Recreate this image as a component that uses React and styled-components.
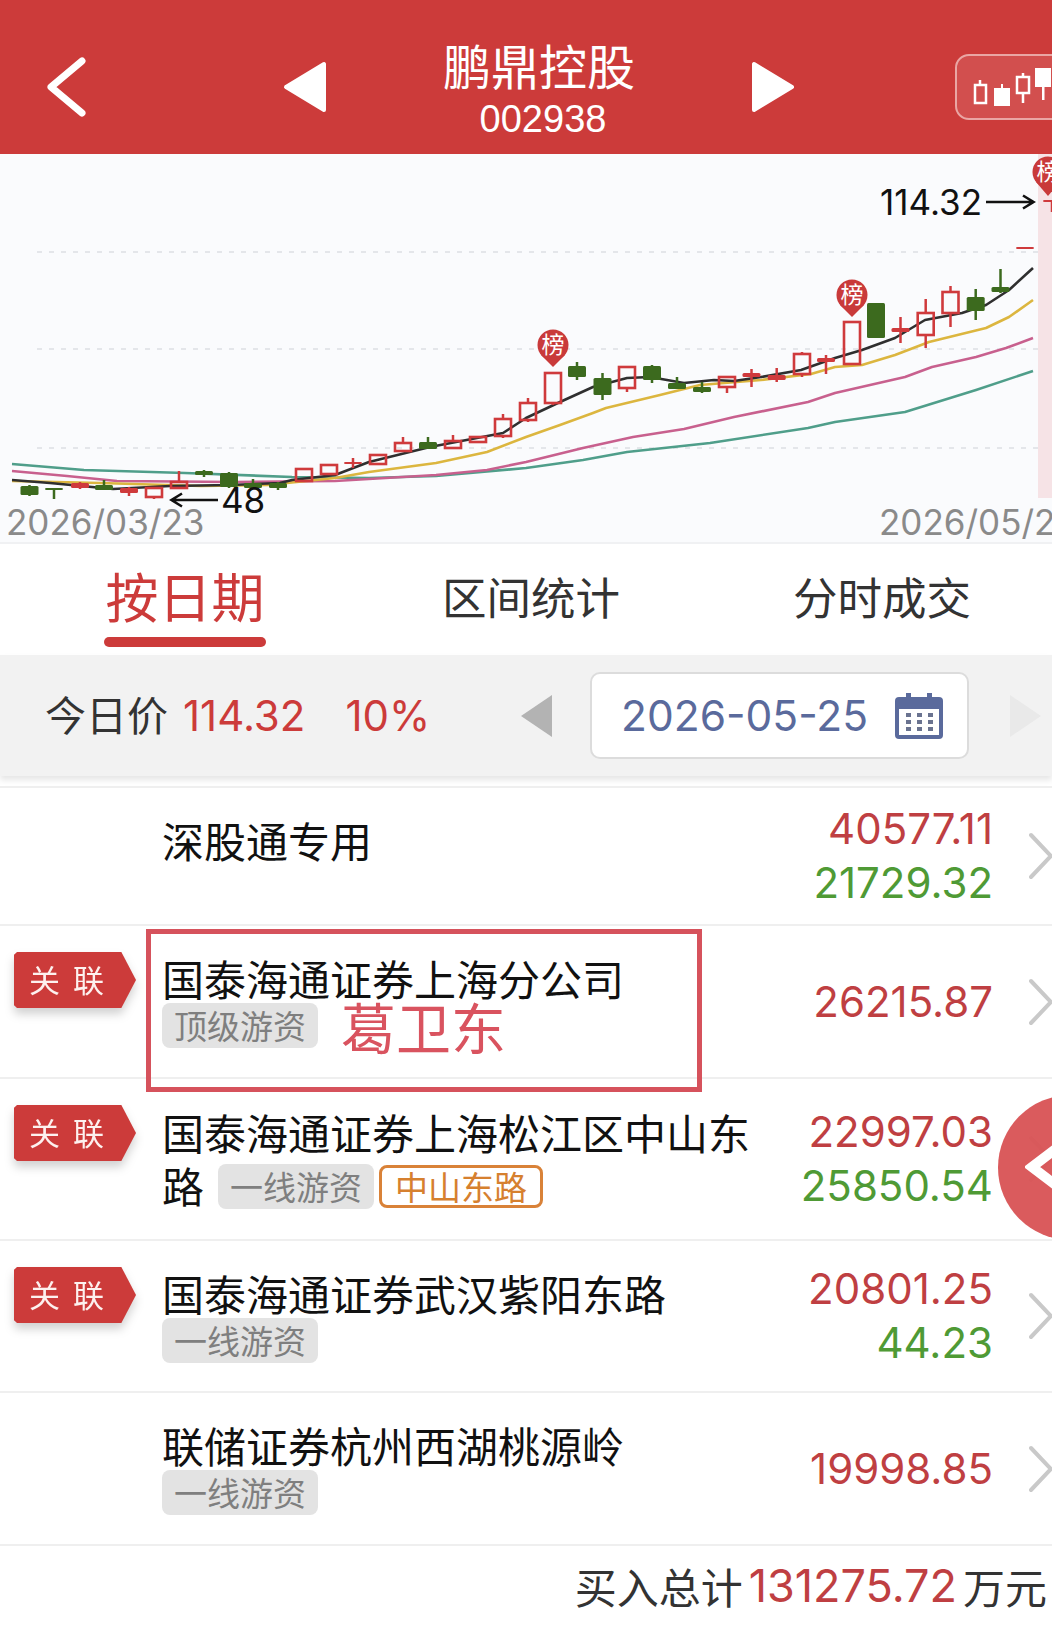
import React from "react";
import styled, { createGlobalStyle } from "styled-components";

const RED = "#cc3b3a";
const NUM_RED = "#bf3f42";
const NUM_GREEN = "#4f9a35";
const CJK = '"Noto Sans CJK SC", "Noto Sans", sans-serif';
const NUM = 'Inter, "Noto Sans CJK SC", sans-serif';

const GlobalStyle = createGlobalStyle`
  html, body {
    margin: 0;
    padding: 0;
    background: #fff;
  }
  * {
    box-sizing: border-box;
  }
`;

const Page = styled.div`
  position: relative;
  width: 1052px;
  height: 1628px;
  overflow: hidden;
  background: #fff;
  font-family: ${NUM};
  color: #111;
`;

/* header */
const Header = styled.header`
  height: 154px;
  display: flex;
  align-items: center;
  padding: 20px 0 0 47px;
  background: ${RED};
  overflow: hidden;
  color: #fff;
`;

const BackIcon = styled.svg`
  width: 40px;
  height: 60px;
  margin-right: 196px;
  flex-shrink: 0;
`;

const Triangle = styled.svg`
  width: 44px;
  height: 52px;
  flex-shrink: 0;
`;

const TitleBlock = styled.div`
  width: 424px;
  flex-shrink: 0;
  display: flex;
  flex-direction: column;
  align-items: center;
`;

const StockName = styled.div`
  font-family: ${CJK};
  font-size: 48px;
  line-height: 60px;
`;

const StockCode = styled.div`
  font-family: "Liberation Sans", sans-serif;
  font-size: 38px;
  line-height: 44px;
  margin: 3px 0 0 8px;
`;

const KlineButton = styled.div`
  width: 130px;
  height: 66px;
  margin-left: 160px;
  flex-shrink: 0;
  border: 2px solid #eaa6a4;
  border-radius: 14px;
  background: #d24f4e;
  display: flex;
`;

const KlineIcon = styled.svg`
  width: 100px;
  height: 62px;
  margin-left: 16px;
`;

/* chart */
const ChartArea = styled.section`
  height: 390px;
  background: #fafbfd;
  border-bottom: 2px solid #f0f1f3;
`;

const ChartSvg = styled.svg`
  display: block;
  width: 1052px;
  height: 388px;
`;

/* tabs */
const Tabs = styled.nav`
  height: 111px;
  display: grid;
  grid-template-columns: 346px 346px 1fr;
  padding-left: 12px;
`;

const Tab = styled.div`
  position: relative;
  display: flex;
  justify-content: center;
  align-items: center;
  font-family: ${CJK};
  font-size: ${(props) => (props.$active ? "53px" : "44.5px")};
  color: ${(props) => (props.$active ? RED : "#333")};
  padding-bottom: ${(props) => (props.$active ? "9px" : "8px")};

  &:nth-child(3) {
    padding-left: 8px;
  }
`;

const TabLine = styled.span`
  position: absolute;
  bottom: 8px;
  left: 50%;
  width: 162px;
  height: 10px;
  margin-left: -81px;
  border-radius: 5px;
  background: ${RED};
`;

/* date toolbar */
const Toolbar = styled.div`
  height: 121px;
  display: flex;
  align-items: center;
  padding-left: 45px;
  background: #f2f2f2;
  box-shadow: 0 4px 6px rgba(0, 0, 0, 0.1);
  position: relative;
`;

const PriceGroup = styled.div`
  width: 476px;
  flex-shrink: 0;
  display: flex;
  align-items: center;
`;

const PriceLabel = styled.span`
  font-family: ${CJK};
  font-size: 41px;
  color: #333;
  margin-right: 15px;
  padding-bottom: 6px;
`;

const PriceValue = styled.span`
  font-size: 42px;
  color: ${RED};
  margin-right: ${(props) => props.$gap || 0}px;
`;

const DateBox = styled.div`
  width: 379px;
  height: 87px;
  margin: 0 40px 0 37px;
  padding: 0 24px 0 29px;
  display: flex;
  align-items: center;
  justify-content: space-between;
  background: #fff;
  border: 2px solid #dcdcdc;
  border-radius: 10px;
  font-size: 42.5px;
  color: #5a6a9c;
`;

const PagerIcon = styled.svg`
  width: 32px;
  height: 42px;
  flex-shrink: 0;
`;

const CalendarIcon = styled.svg`
  width: 48px;
  height: 46px;
  flex-shrink: 0;
`;

/* list */
const List = styled.div`
  margin-top: 10px;
  border-top: 2px solid #efefef;
`;

const Row = styled.div`
  position: relative;
  height: ${(props) => props.$height}px;
  display: flex;
  align-items: center;
  border-bottom: 2px solid #efefef;
`;

const BadgeCol = styled.div`
  width: 162px;
  align-self: flex-start;
  flex-shrink: 0;
  padding: ${(props) => props.$top}px 0 0 14px;
`;

const BadgeShadow = styled.div`
  width: 122px;
  filter: drop-shadow(0 6px 5px rgba(0, 0, 0, 0.18));
`;

const Badge = styled.div`
  height: 56px;
  padding-left: 15px;
  background: ${RED};
  clip-path: polygon(3px 0, 88% 0, 100% 50%, 88% 100%, 3px 100%, 0 95%, 0 5%);
  font-family: ${CJK};
  font-size: 31px;
  line-height: 54px;
  letter-spacing: 13px;
  color: #fdf1ef;
  white-space: nowrap;
`;

const NameCol = styled.div`
  width: 600px;
  flex-shrink: 0;
  align-self: flex-start;
  padding-top: ${(props) => props.$top}px;
  font-family: ${CJK};
  font-size: 42px;
  line-height: 53px;
  color: #111;
`;

const TagLine = styled.div`
  display: ${(props) => (props.$inline ? "inline-flex" : "flex")};
  align-items: center;
  gap: 5px;
  margin-left: ${(props) => (props.$inline ? "14px" : "0")};
  vertical-align: top;
  height: 46px;
  margin-top: ${(props) => (props.$inline ? "5px" : "-2px")};
`;

const Tag = styled.span`
  height: ${(props) => (props.$outline ? "43px" : "45px")};
  padding: 0 ${(props) => (props.$outline ? "13px" : "12px")};
  display: inline-flex;
  align-items: center;
  border-radius: 8px;
  font-size: 33px;
  line-height: 1;
  color: ${(props) => (props.$outline ? "#d6802f" : "#7f7f7f")};
  background: ${(props) => (props.$outline ? "transparent" : "#e3e3e3")};
  border: ${(props) => (props.$outline ? "3px solid #d98238" : "none")};
`;

const NoteName = styled.span`
  margin-left: 18px;
  font-size: 55px;
  line-height: 46px;
  color: #d9535f;
`;

const NoteFrame = styled.div`
  position: absolute;
  left: 146px;
  top: 3px;
  width: 556px;
  height: 163px;
  border: 5px solid #d6525c;
  z-index: 2;
`;

const ValueCol = styled.div`
  margin-left: auto;
  margin-right: 36px;
  text-align: right;
  font-size: 42px;
  line-height: 54px;
`;

const Value = styled.div`
  color: ${(props) => (props.$green ? NUM_GREEN : NUM_RED)};
`;

const RowArrow = styled.svg`
  width: 24px;
  height: 48px;
  flex-shrink: 0;
  margin-right: -1px;
`;

const FloatButton = styled.div`
  position: absolute;
  left: 998px;
  top: 1095px;
  width: 145px;
  height: 145px;
  padding: 36px 0 0 27px;
  border-radius: 50%;
  background: rgba(216, 84, 86, 0.96);
  z-index: 3;
`;

const FloatIcon = styled.svg`
  display: block;
  width: 54px;
  height: 72px;
`;

const Footer = styled.footer`
  height: 83px;
  display: flex;
  align-items: center;
  justify-content: flex-end;
  gap: 6px;
  padding: 0 5px 4px 0;
  font-family: ${CJK};
  font-size: 42px;
  color: #333;
`;

const FooterNum = styled.span`
  font-family: ${NUM};
  font-size: 45px;
  color: ${NUM_RED};
`;

// x, body top, body bottom, wick top, wick bottom, kind (h hollow red, r solid red, g green)
const candles = [
  [29.5, 486, 495, 485, 496, "g"],
  [54, 488, 490, 488, 499, "g"],
  [80, 483, 488, 482, 489, "r"],
  [104, 485, 490, 480, 490, "g"],
  [129, 488, 493, 487, 496, "r"],
  [154, 488, 497, 488, 499, "h"],
  [179, 482, 488, 471, 488, "h"],
  [204, 471, 475, 470, 477, "g"],
  [229, 473, 487, 472, 488, "g"],
  [253, 483, 488, 479, 488, "g"],
  [278, 483, 488, 482, 490, "g"],
  [304, 469, 481, 469, 481, "h"],
  [329, 465, 474, 465, 474, "h"],
  [353, 462, 464, 458, 468, "r"],
  [378, 455, 464, 455, 464, "h"],
  [403, 443, 451, 437, 451, "h"],
  [428, 442, 449, 437, 449, "g"],
  [453, 441, 448, 435, 448, "h"],
  [478, 437, 442, 437, 443, "h"],
  [503, 419, 436, 414, 438, "h"],
  [528, 403, 420, 398, 422, "h"],
  [553, 373, 403, 373, 405, "h"],
  [577, 366, 377, 362, 380, "g"],
  [602.5, 378, 395, 373, 400, "g"],
  [627, 367, 388, 367, 392, "h"],
  [652, 366, 380, 365, 383, "g"],
  [677, 383, 389, 377, 389, "g"],
  [702, 387, 392, 382, 393, "g"],
  [727, 377, 387, 377, 393, "h"],
  [751.5, 373, 377, 369, 387, "r"],
  [776.7, 375, 380, 368, 382, "r"],
  [802, 354, 374, 352, 377, "h"],
  [826, 358, 362, 355, 374, "r"],
  [852, 322, 364, 322, 365, "h"],
  [876, 303, 338, 303, 338, "g"],
  [900.5, 328, 332, 317, 343, "r"],
  [925.7, 313, 335, 299, 348, "h"],
  [950.5, 292, 313, 286, 327, "h"],
  [975.7, 297, 311, 289, 320, "g"],
  [1000.5, 287, 292, 269, 293, "g"],
  [1025, 247, 249, 247, 249, "r"],
  [1052, 200, 202, 200, 212, "r"],
];

const lines = [
  {
    color: "#4f9e8a",
    points:
      "12,464 84,470 185,473 292,477 369,478 436,476 526,468 583,460 627,452 710,443 808,428 835,422 905,412 976,390 1033,371",
  },
  {
    color: "#c8608e",
    points:
      "12,471 67,476 117,481 235,482 335,481 436,475 487,470 526,462 583,448 633,437 684,429 734,417 808,402 835,393 905,377 932,367 976,357 1006,348 1033,338",
  },
  {
    color: "#dcb63f",
    points:
      "12,481 100,483 201,486 268,485 335,478 369,472 436,463 487,452 526,437 560,425 593,413 606,408 660,395 700,385 761,380 811,374 835,367 862,365 895,355 929,342 986,328 1009,317 1033,300",
  },
  {
    color: "#2f2f2f",
    points:
      "12,480 50,483 113,489 170,486 230,485 280,483 292,480 335,475 369,462 430,447 503,433 526,418 560,402 593,387 627,378 650,377 684,383 714,380 734,381 761,377 801,370 835,358 862,350 895,338 925,320 962,313 986,305 1009,290 1033,268",
  },
];

function Candle({ data }) {
  const [x, top, bottom, wickTop, wickBottom, kind] = data;
  const color = kind === "g" ? "#3c6a1e" : "#cf3a3c";
  const w = 18;
  return (
    <g>
      <line x1={x} x2={x} y1={wickTop} y2={top} stroke={color} strokeWidth="2.5" />
      <line x1={x} x2={x} y1={bottom} y2={wickBottom} stroke={color} strokeWidth="2.5" />
      {kind === "h" ? (
        <rect
          x={x - w / 2 + 1}
          y={top}
          width={w - 2}
          height={bottom - top}
          fill="none"
          stroke={color}
          strokeWidth="2.6"
        />
      ) : (
        <rect x={x - w / 2} y={top} width={w} height={bottom - top} fill={color} rx="1.5" />
      )}
    </g>
  );
}

function Marker({ x, y, tip }) {
  return (
    <g>
      <path d={`M${x - 12} ${y + 10} L${x} ${tip} L${x + 12} ${y + 10} Z`} fill="#c93a3a" />
      <circle cx={x} cy={y} r="15.5" fill="#c93a3a" />
      <text
        x={x}
        y={y + 8}
        textAnchor="middle"
        fontSize="23"
        fill="#fff"
        fontFamily="Noto Sans CJK SC"
      >
        榜
      </text>
    </g>
  );
}

function Chart() {
  return (
    <ChartSvg viewBox="0 154 1052 388">
      <rect x="1038" y="154" width="14" height="344" fill="#f6e3e6" />
      {[252, 349, 448].map((y) => (
        <line
          key={y}
          x1="37"
          x2="1040"
          y1={y}
          y2={y}
          stroke="#e4e6ea"
          strokeWidth="2"
          strokeDasharray="5 7"
        />
      ))}
      {lines.map((l) => (
        <polyline
          key={l.color}
          points={l.points}
          fill="none"
          stroke={l.color}
          strokeWidth="2.6"
          strokeLinejoin="round"
        />
      ))}
      {candles.map((c) => (
        <Candle key={c[0]} data={c} />
      ))}
      <Marker x={553} y={345} tip={367} />
      <Marker x={852} y={295} tip={317} />
      <Marker x={1048} y={172} tip={196} />

      <text x="880" y="215" fontSize="35" fill="#111" fontFamily="Inter">
        114.32
      </text>
      <path d="M986 202H1033M1023 195.5L1033.5 202L1023 208.5" fill="none" stroke="#111" strokeWidth="2.6" />
      <path d="M218 500H172M182 493.5L171.5 500L182 506.5" fill="none" stroke="#111" strokeWidth="2.6" />
      <text x="221" y="513" fontSize="35" fill="#111" fontFamily="Inter">
        48
      </text>
      <text x="6" y="535" fontSize="35" fill="#8a8a8a" fontFamily="Inter">
        2026/03/23
      </text>
      <text x="879" y="535" fontSize="35" fill="#8a8a8a" fontFamily="Inter">
        2026/05/25
      </text>
    </ChartSvg>
  );
}

const rows = [
  { id: 1, height: 138, nameTop: 25, name: "深股通专用", values: ["40577.11", "21729.32"] },
  {
    id: 2,
    height: 153,
    badge: 26,
    nameTop: 25,
    name: "国泰海通证券上海分公司",
    tags: ["顶级游资"],
    note: "葛卫东",
    values: ["26215.87"],
  },
  {
    id: 3,
    height: 162,
    badge: 26,
    nameTop: 26,
    name: "国泰海通证券上海松江区中山东路",
    tags: ["一线游资"],
    place: "中山东路",
    inline: true,
    values: ["22997.03", "25850.54"],
  },
  {
    id: 4,
    height: 152,
    badge: 26,
    nameTop: 25,
    name: "国泰海通证券武汉紫阳东路",
    tags: ["一线游资"],
    values: ["20801.25", "44.23"],
  },
  {
    id: 5,
    height: 153,
    nameTop: 25,
    name: "联储证券杭州西湖桃源岭",
    tags: ["一线游资"],
    values: ["19998.85"],
  },
];

function ListRow({ row }) {
  const greenAt = row.values.length > 1 ? 1 : -1;
  return (
    <Row $height={row.height}>
      <BadgeCol $top={row.badge || 0}>
        {row.badge && (
          <BadgeShadow>
            <Badge>关联</Badge>
          </BadgeShadow>
        )}
      </BadgeCol>
      <NameCol $top={row.nameTop}>
        {row.name}
        {row.tags && (
          <TagLine $inline={row.inline}>
            {row.tags.map((t) => (
              <Tag key={t}>{t}</Tag>
            ))}
            {row.place && <Tag $outline>{row.place}</Tag>}
            {row.note && <NoteName>{row.note}</NoteName>}
          </TagLine>
        )}
      </NameCol>
      {row.note && <NoteFrame />}
      <ValueCol>
        {row.values.map((v, i) => (
          <Value key={v} $green={i === greenAt}>
            {v}
          </Value>
        ))}
      </ValueCol>
      <RowArrow viewBox="0 0 24 48">
        <path d="M2 3L22 24L2 45" fill="none" stroke="#c9c9c9" strokeWidth="4" strokeLinecap="round" />
      </RowArrow>
    </Row>
  );
}

export default function App() {
  return (
    <Page>
      <GlobalStyle />
      <Header>
        <BackIcon viewBox="0 0 40 60">
          <path
            d="M35 4L4 30L35 56"
            fill="none"
            stroke="#fff"
            strokeWidth="7"
            strokeLinecap="round"
            strokeLinejoin="round"
          />
        </BackIcon>
        <Triangle viewBox="0 0 44 52">
          <path d="M41 3V49L3 26Z" fill="#fff" stroke="#fff" strokeWidth="4" strokeLinejoin="round" />
        </Triangle>
        <TitleBlock>
          <StockName>鹏鼎控股</StockName>
          <StockCode>002938</StockCode>
        </TitleBlock>
        <Triangle viewBox="0 0 44 52">
          <path d="M3 3V49L41 26Z" fill="#fff" stroke="#fff" strokeWidth="4" strokeLinejoin="round" />
        </Triangle>
        <KlineButton>
          <KlineIcon viewBox="0 0 100 62">
            <g fill="none" stroke="#fff" strokeWidth="2.5">
              <path d="M7 24V29" />
              <rect x="2" y="29" width="11" height="18" />
              <path d="M50 17V21M50 37V47" />
              <rect x="44" y="21" width="12" height="16" />
            </g>
            <g fill="#fff">
              <rect x="21" y="32" width="16" height="18" />
              <rect x="28" y="28" width="2" height="5" />
              <rect x="62" y="12" width="16" height="19" />
              <rect x="69" y="30" width="2.5" height="14" />
            </g>
          </KlineIcon>
        </KlineButton>
      </Header>

      <ChartArea>
        <Chart />
      </ChartArea>

      <Tabs>
        <Tab $active>
          按日期
          <TabLine />
        </Tab>
        <Tab>区间统计</Tab>
        <Tab>分时成交</Tab>
      </Tabs>

      <Toolbar>
        <PriceGroup>
          <PriceLabel>今日价</PriceLabel>
          <PriceValue $gap={40}>114.32</PriceValue>
          <PriceValue>10%</PriceValue>
        </PriceGroup>
        <PagerIcon viewBox="0 0 32 42">
          <path d="M31 0V42L0 21Z" fill="#b3b3b3" />
        </PagerIcon>
        <DateBox>
          2026-05-25
          <CalendarIcon viewBox="0 0 48 46">
            <path d="M4 4H44A4 4 0 0 1 48 8V42A4 4 0 0 1 44 46H4A4 4 0 0 1 0 42V8A4 4 0 0 1 4 4Z" fill="#5a6a9c" />
            <rect x="11" y="0" width="5" height="11" fill="#5a6a9c" />
            <rect x="32" y="0" width="5" height="11" fill="#5a6a9c" />
            <rect x="4" y="16" width="40" height="26" fill="#fff" />
            <g fill="#6a7390">
              <rect x="11" y="20" width="5" height="4" />
              <rect x="22" y="20" width="5" height="4" />
              <rect x="33" y="20" width="5" height="4" />
              <rect x="11" y="27" width="5" height="4" />
              <rect x="22" y="27" width="5" height="4" />
              <rect x="33" y="27" width="5" height="4" />
              <rect x="11" y="34" width="5" height="4" />
              <rect x="22" y="34" width="5" height="4" />
              <rect x="33" y="34" width="5" height="4" />
            </g>
          </CalendarIcon>
        </DateBox>
        <PagerIcon viewBox="0 0 32 42">
          <path d="M1 0V42L32 21Z" fill="#e9e9e9" />
        </PagerIcon>
      </Toolbar>

      <List>
        {rows.map((row) => (
          <ListRow key={row.id} row={row} />
        ))}
      </List>

      <Footer>
        买入总计
        <FooterNum>131275.72</FooterNum>
        万元
      </Footer>

      <FloatButton>
        <FloatIcon viewBox="0 0 54 72">
          <path d="M36 14L7 36L36 58" fill="none" stroke="#fff" strokeWidth="10" />
        </FloatIcon>
      </FloatButton>
    </Page>
  );
}
